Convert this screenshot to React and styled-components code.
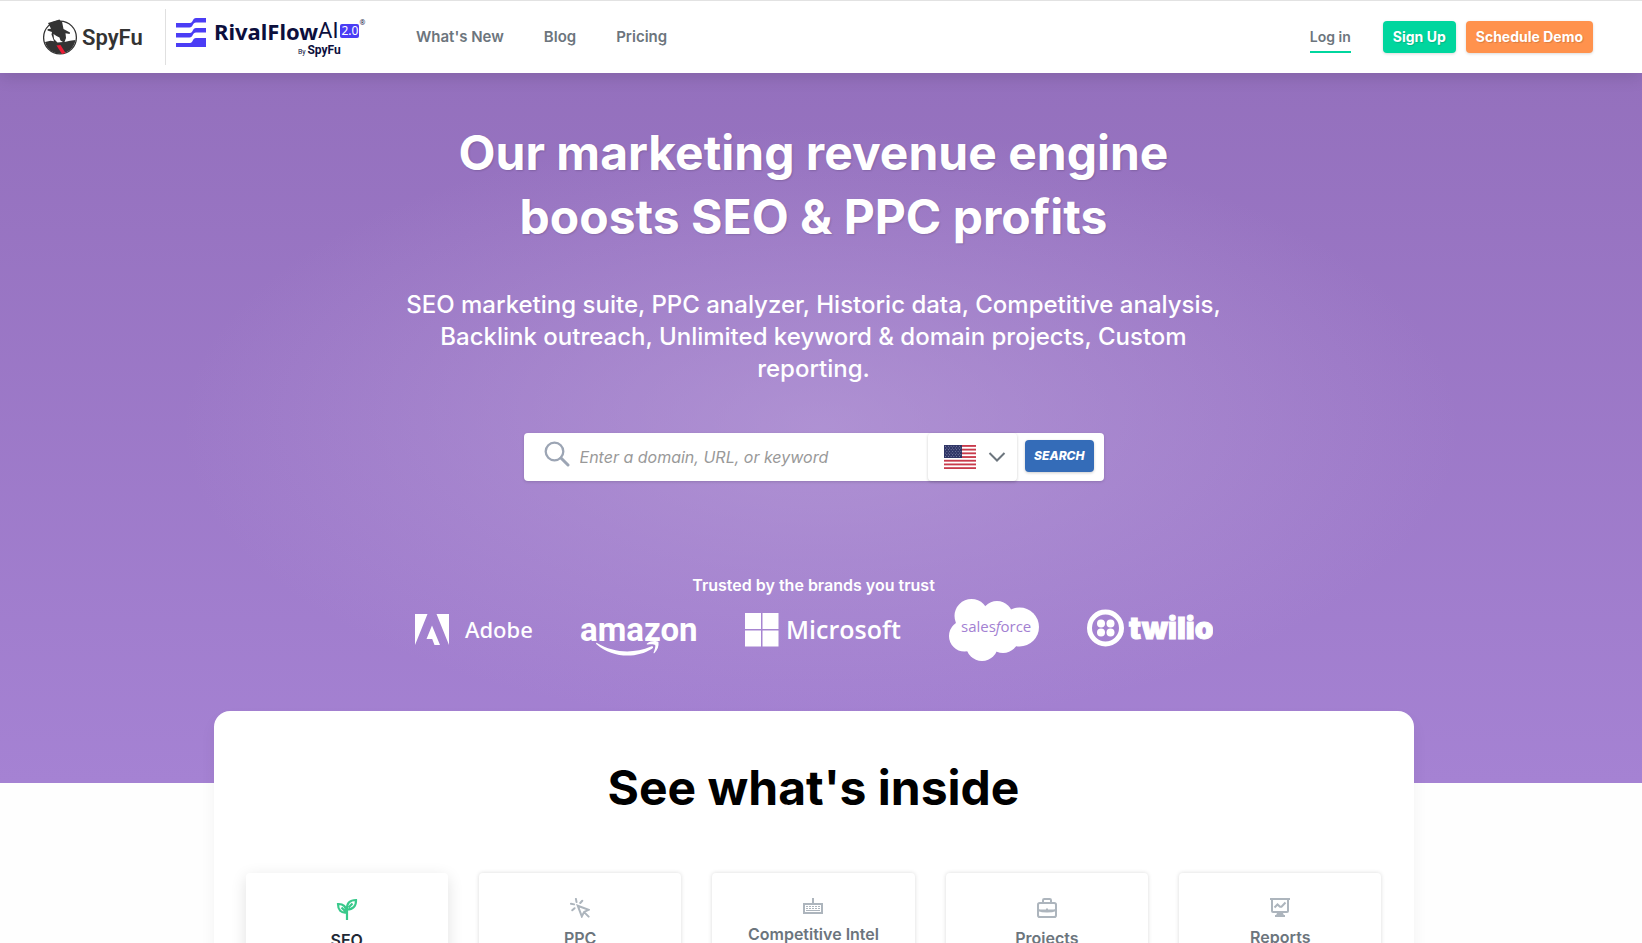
import React, { useState } from 'react'
import styled, { createGlobalStyle } from 'styled-components'

const flagRows = [0, 1, 2, 3, 4, 5, 6]

const SpyFuMark = () => (
  <svg width="36" height="36" viewBox="0 0 36 36" aria-hidden="true">
    <circle cx="18" cy="18.5" r="16.4" fill="#fff" stroke="#333" strokeWidth="1.3" />
    <path d="M6 4 17.500.5l1 1.500 1.500.5L21.500 10l6.500 3.500-.3 1.500-4.200-.8L24 19l-1.500 4 5.500-1.200 5.500-.8c-1.500 8-7.500 13.500-15.500 13.500-7.500 0-13-4.500-15-11.500l5.500-1.200 3.500.5-2.500-6.800L10 13l-4.500-1.500.2-1.500 3.300-.3z" fill="#333" />
    <path d="M11.500 15l.5 5 3.500 3.500 5.500-.5-2.500-1.500-1-3-3-1.500z" fill="#fff" />
    <path d="M14.500 26.500l4-.5 5 8-3.500 1z" fill="#ec1c35" />
  </svg>
)

const RivalMark = () => (
  <svg width="30" height="29" viewBox="0 0 30 29" fill="#4b3df5" aria-hidden="true">
    <path d="M0 5h14c3 0 2.500-5 6-5h10v4.500H20c-3.500 0-3 5-6.500 5H0z" />
    <path d="M0 15h14c3 0 2.500-5 6-5h10v4.500H20c-3.500 0-3 5-6.500 5H0z" />
    <path d="M0 25h14c3 0 2.500-5 6-5h10v9H0z" />
  </svg>
)

const SearchIcon = () => (
  <svg width="26" height="26" viewBox="0 0 26 26" fill="none" stroke="#9ca5b4" aria-hidden="true">
    <circle cx="10.500" cy="10.500" r="8.800" strokeWidth="2.300" />
    <path d="M17 17l7 7" strokeWidth="3" strokeLinecap="round" />
  </svg>
)

const Flag = () => (
  <svg width="32" height="24" viewBox="0 0 32 24" aria-hidden="true">
    <rect width="32" height="24" fill="#fff" />
    {flagRows.map((n) => (
      <rect key={n} y={n * 3.7} width="32" height="1.850" fill="#c83a4b" />
    ))}
    <rect width="18" height="13" fill="#2f3566" />
    {flagRows.map((row) =>
      [0, 1, 2, 3, 4, 5].map((col) => (
        <circle
          key={`${row}-${col}`}
          cx={1.5 + col * 2.8 + (row % 2 ? 1.4 : 0)}
          cy={1.3 + row * 1.7}
          r="0.45"
          fill="#c3c6dc"
        />
      ))
    )}
  </svg>
)

const Chevron = () => (
  <svg width="18" height="10" viewBox="0 0 18 10" fill="none" stroke="#6c757d" strokeWidth="2" aria-hidden="true">
    <path d="M1.500 1 9 8.500 16.500 1" />
  </svg>
)

const AdobeLogo = () => (
  <svg width="118" height="32" viewBox="0 0 118 32" role="img" aria-label="Adobe" fill="#fff">
    <path d="M0 0h12.500L0 31zM21.500 0H34v31zM17 11.500 25 31h-5.500l-2.300-6H11.500z" />
    <text x="50" y="24" fontSize="22" fontWeight="500" fontFamily="'Noto Sans', sans-serif">Adobe</text>
  </svg>
)

const AmazonLogo = () => (
  <svg width="118" height="52" viewBox="0 0 118 52" role="img" aria-label="amazon" fill="#fff">
    <text x="0" y="37" fontSize="33" fontWeight="700" fontFamily="Roboto, sans-serif">amazon</text>
    <path d="M17 39c17 10 36 11 54 3.500 2-.8 3 1 1 2.300C56 55 32 54 16.500 40.200c-.8-.8-.3-1.700.5-1.200z" />
    <path d="M67 39.500c4-3 9-3 11.500-1.500.5 4-1 8-4 11-.8.5-1.200 0-.8-.8 1-2.500 2-5.500 1.500-7.200-1.500-1.200-5-.8-7.500-.5-1 .1-1.200-.5-.7-1z" />
  </svg>
)

const MicrosoftLogo = () => (
  <svg width="157" height="34" viewBox="0 0 157 34" role="img" aria-label="Microsoft" fill="#fff">
    <path d="M0 0h16v16H0zM17.500 0h16v16h-16zM0 17.500h16v16H0zM17.500 17.500h16v16h-16z" />
    <text x="41" y="26" fontSize="25" fontWeight="600" fontFamily="'Open Sans', sans-serif">Microsoft</text>
  </svg>
)

const SalesforceLogo = () => (
  <svg width="90" height="62" viewBox="0 0 90 62" role="img" aria-label="salesforce" fill="#fff">
    <circle cx="22.500" cy="17" r="17" />
    <circle cx="48" cy="18" r="16" />
    <circle cx="70.500" cy="28" r="19.500" />
    <circle cx="15.500" cy="37" r="15.500" />
    <circle cx="33" cy="46" r="16" />
    <circle cx="54" cy="38" r="16" />
    <path d="M15 20h60v20l-40 12-20-5z" />
    <text x="12" y="33" fontSize="15" fill="#a381d2" fontFamily="'Open Sans', sans-serif">
      sales<tspan fontStyle="italic">f</tspan>orce
    </text>
  </svg>
)

const TwilioLogo = () => (
  <svg width="126" height="42" viewBox="0 0 126 42" role="img" aria-label="twilio" fill="#fff">
    <circle cx="18.500" cy="19" r="16" fill="none" stroke="#fff" strokeWidth="5" />
    <circle cx="14" cy="14.500" r="4" />
    <circle cx="23.500" cy="14.500" r="4" />
    <circle cx="14" cy="23.500" r="4" />
    <circle cx="23.500" cy="23.500" r="4" />
    <text x="42" y="30" fontSize="30" fontWeight="900" fontFamily="Inter, sans-serif" stroke="#fff">twilio</text>
  </svg>
)

const SeedlingIcon = () => (
  <svg width="22" height="22" viewBox="0 0 22 22" fill="none" stroke="currentColor" strokeWidth="2.200" aria-hidden="true">
    <path d="M11 22V12M2 6c5-.3 8.500 2.500 8.500 8.500C5 15.200 2 12 2 6zM11 11.500C10.500 5 14 2 20 2c.3 6-3 9.500-9 9.500M5.500 9.500l4 4M12.500 9.500l4-4" />
  </svg>
)

const ClickIcon = () => (
  <svg width="20" height="20" viewBox="0 0 22 22" fill="none" stroke="currentColor" strokeWidth="2.200" strokeLinecap="round" aria-hidden="true">
    <path d="M8.500 8.500l12 4.500-5 2.300-2.500 5zM15.500 15.500l5 5M6.500 1l.7 3.500M1 6.300l3.500.7M13.500 3l-2.200 2.500M2.500 13.500 5 11.300" />
  </svg>
)

const KeyboardIcon = () => (
  <svg width="20" height="16" viewBox="0 0 20 16" fill="none" stroke="currentColor" aria-hidden="true">
    <path d="M1 6h18v9H1z" strokeWidth="2" />
    <path d="M10 0v5" strokeWidth="2" />
    <path d="M3 8.500h14M3 10.500h14" strokeWidth="1" strokeDasharray="2 1" />
    <path d="M3 12.500h14" strokeWidth="1" />
  </svg>
)

const BriefcaseIcon = () => (
  <svg width="20" height="20" viewBox="0 0 20 20" fill="none" stroke="currentColor" strokeWidth="2" aria-hidden="true">
    <rect x="1" y="5" width="18" height="14" rx="1.800" />
    <path d="M6 4.500V2.200C6 1.400 6.500 1 7.300 1h5.400c.8 0 1.300.4 1.300 1.200v2.300M1 12c5 2 13 2 18 0M1 12.500h18M10 10.500v3" />
  </svg>
)

const BoardIcon = () => (
  <svg width="20" height="19" viewBox="0 0 20 19" fill="none" stroke="currentColor" strokeWidth="2" aria-hidden="true">
    <path d="M0 1h20M2 1v12c0 .6.4 1 1 1h14c.6 0 1-.4 1-1V1M8 15l-1 2.500M12 15l1 2.500M5 18h10M8 16h4" />
    <path d="M4.500 9.500l3-3 2.500 2.300h1.500l4-4.300" />
  </svg>
)

const tabs = [
  { name: 'SEO', icon: <SeedlingIcon /> },
  { name: 'PPC', icon: <ClickIcon /> },
  { name: 'Competitive Intel', icon: <KeyboardIcon /> },
  { name: 'Projects', icon: <BriefcaseIcon /> },
  { name: 'Reports', icon: <BoardIcon /> },
]

const App = () => {
  const [keyword, setKeyword] = useState('')
  const [activeTab, setActiveTab] = useState('SEO')

  return (
    <Page>
      <GlobalStyle />
      <Header>
        <SpyFuLink href="#spyfu">
          <SpyFuMark />
          <span>SpyFu</span>
        </SpyFuLink>
        <RivalLink href="#rivalflow">
          <RivalMark />
          <RivalText>
            <RivalName>
              RivalFlow<span>AI</span>
              <Version>2.0</Version>
              <sup>®</sup>
            </RivalName>
            <ByLine>
              By <b>SpyFu</b>
            </ByLine>
          </RivalText>
        </RivalLink>
        <Nav>
          <NavLink href="#new">What's New</NavLink>
          <NavLink href="#blog">Blog</NavLink>
          <NavLink href="#pricing">Pricing</NavLink>
        </Nav>
        <Actions>
          <LoginLink href="#login">Log in</LoginLink>
          <ActionButton $color="#00d69e">Sign Up</ActionButton>
          <ActionButton $color="#ff924d">Schedule Demo</ActionButton>
        </Actions>
      </Header>
      <Hero>
        <Title>Our marketing revenue engine boosts SEO & PPC profits</Title>
        <Subtitle>
          SEO marketing suite, PPC analyzer, Historic data, Competitive
          analysis, Backlink outreach, Unlimited keyword & domain projects,
          Custom reporting.
        </Subtitle>
        <SearchForm onSubmit={(e) => e.preventDefault()}>
          <SearchLabel htmlFor="keyword" aria-label="Search">
            <SearchIcon />
          </SearchLabel>
          <SearchInput
            id="keyword"
            value={keyword}
            placeholder="Enter a domain, URL, or keyword"
            onChange={(e) => setKeyword(e.target.value)}
          />
          <CountryButton type="button" aria-label="Country: United States">
            <Flag />
            <Chevron />
          </CountryButton>
          <SearchButton type="submit">SEARCH</SearchButton>
        </SearchForm>
        <Trusted>Trusted by the brands you trust</Trusted>
        <Brands>
          <AdobeLogo />
          <AmazonLogo />
          <MicrosoftLogo />
          <SalesforceLogo />
          <TwilioLogo />
        </Brands>
      </Hero>
      <InsideWrap>
        <Inside>
          <InsideTitle>See what's inside</InsideTitle>
          <Tabs>
            {tabs.map((tab) => (
              <Tab
                key={tab.name}
                type="button"
                $active={tab.name === activeTab}
                onClick={() => setActiveTab(tab.name)}
              >
                {tab.icon}
                <span>{tab.name}</span>
              </Tab>
            ))}
          </Tabs>
        </Inside>
      </InsideWrap>
    </Page>
  )
}

const GlobalStyle = createGlobalStyle`
  * {
    box-sizing: border-box;
  }
  html {
    height: 100%;
    overflow: hidden;
  }
  body {
    margin: 0;
    height: 100%;
    overflow: hidden auto;
    scrollbar-width: none;
    background-color: #fefefe;
    font-family: Inter, 'Liberation Sans', sans-serif;
  }
  button, input {
    font-family: inherit;
  }
  a {
    text-decoration: none;
  }
  svg {
    flex-shrink: 0;
  }
`

const Page = styled.div`
  width: 100%;
`

const Header = styled.header`
  position: relative;
  z-index: 1;
  display: flex;
  align-items: center;
  height: 73px;
  padding: 0 49px 0 42px;
  border-top: 1px solid #e2e2e2;
  background-color: #fff;
  box-shadow: 0 4px 16px rgba(0, 0, 0, 0.12);
`

const SpyFuLink = styled.a`
  display: flex;
  align-items: center;
  gap: 4px;
  width: 124px;
  height: 56px;
  border-right: 1px solid #e0e0e0;
  color: #333;
  font-family: Roboto, sans-serif;
  font-size: 22px;
  font-weight: 600;
`

const RivalLink = styled.a`
  display: flex;
  align-items: flex-start;
  gap: 8px;
  width: 192px;
  height: 38px;
  margin-left: 10px;
  color: #0c0f3d;
`

const RivalText = styled.div`
  font-family: 'Noto Sans', sans-serif;
`

const RivalName = styled.div`
  display: flex;
  align-items: center;
  height: 26px;
  font-size: 22px;
  font-weight: 700;
  line-height: 26px;
  span {
    font-family: Roboto, sans-serif;
    font-weight: 400;
  }
  sup {
    align-self: flex-start;
    font-size: 7px;
    font-weight: 400;
    line-height: 10px;
  }
`

const Version = styled.b`
  margin-left: 2px;
  padding: 0 1px;
  border-radius: 2px;
  background-color: #4b3df5;
  color: #fff;
  font-size: 12px;
  font-weight: 400;
  line-height: 14px;
`

const ByLine = styled.div`
  padding-left: 84px;
  font-family: Roboto, sans-serif;
  font-size: 7px;
  line-height: 12px;
  b {
    font-size: 12px;
  }
`

const Nav = styled.nav`
  display: flex;
  gap: 40px;
  margin-left: 48px;
`

const NavLink = styled.a`
  color: #6c757d;
  font-size: 15px;
  font-weight: 600;
  line-height: 20px;
`

const Actions = styled.div`
  display: flex;
  align-items: center;
  gap: 10px;
  margin-left: auto;
`

const LoginLink = styled.a`
  margin-right: 22px;
  padding: 4px 0 2px;
  border-bottom: 2px solid #00d69e;
  color: #6c757d;
  font-size: 14px;
  font-weight: 600;
  line-height: 24px;
`

const ActionButton = styled.button`
  height: 32px;
  padding: 0 10px 2px;
  border: 0;
  border-radius: 4px;
  background-color: ${(props) => props.$color};
  box-shadow: 0 1px 3px rgba(0, 0, 0, 0.15);
  color: #fff;
  font-size: 14px;
  font-weight: 700;
  text-shadow: 1px 1px 1px rgba(0, 0, 0, 0.15);
  cursor: pointer;
`

const Hero = styled.section`
  display: flex;
  flex-direction: column;
  align-items: center;
  padding: 48px 15px 120px 0;
  background: radial-gradient(
      ellipse 640px 300px at 50% 50%,
      rgba(190, 165, 220, 0.55),
      rgba(190, 165, 220, 0)
    ),
    linear-gradient(#9470bd, #a582d3);
  color: #fff;
  text-align: center;
`

const Title = styled.h1`
  max-width: 840px;
  margin: 0;
  font-size: 48px;
  font-weight: 700;
  line-height: 64px;
  text-shadow: 1px 1px 2px rgba(0, 0, 0, 0.15);
  text-wrap: balance;
`

const Subtitle = styled.p`
  max-width: 840px;
  margin: 40px 0 48px;
  font-size: 24px;
  font-weight: 500;
  line-height: 32px;
`

const SearchForm = styled.form`
  display: flex;
  align-items: center;
  width: 100%;
  max-width: 580px;
  height: 48px;
  padding-right: 10px;
  border-radius: 4px;
  background-color: #fff;
  box-shadow: 0 1px 3px rgba(0, 0, 0, 0.15);
`

const SearchLabel = styled.label`
  display: flex;
  padding: 0 10px 6px 20px;
`

const SearchInput = styled.input`
  flex: 1;
  min-width: 0;
  height: 100%;
  padding: 0;
  border: 0;
  outline: 0;
  background: none;
  color: #333;
  font-size: 16px;
  font-style: italic;
  &::placeholder {
    color: #999;
  }
`

const CountryButton = styled.button`
  display: flex;
  align-items: center;
  gap: 12px;
  height: 48px;
  margin-right: 8px;
  padding: 0 11px 0 16px;
  border: 0;
  border-radius: 4px;
  background-color: #fff;
  box-shadow: 0 1px 3px rgba(0, 0, 0, 0.2);
  cursor: pointer;
`

const SearchButton = styled.button`
  height: 32px;
  padding: 0 9px 2px;
  margin-bottom: 2px;
  border: 0;
  border-radius: 4px;
  background-color: #346cb8;
  box-shadow: 0 1px 3px rgba(0, 0, 0, 0.2);
  color: #fff;
  font-size: 12px;
  font-style: italic;
  font-weight: 800;
  cursor: pointer;
`

const Trusted = styled.p`
  margin: 92px 0 0;
  font-size: 16px;
  font-weight: 600;
  line-height: 24px;
`

const Brands = styled.div`
  display: flex;
  align-items: center;
  justify-content: space-between;
  width: 100%;
  max-width: 798px;
  height: 66px;
`

const InsideWrap = styled.div`
  display: flex;
  justify-content: center;
  margin-top: -72px;
  padding-right: 15px;
`

const Inside = styled.section`
  width: 100%;
  max-width: 1200px;
  padding: 40px 32px;
  border-radius: 16px;
  background-color: #fff;
  box-shadow: 0 8px 16px rgba(0, 0, 0, 0.05);
`

const InsideTitle = styled.h2`
  margin: 0 0 48px;
  color: #000;
  font-size: 48px;
  font-weight: 700;
  line-height: 74px;
  text-align: center;
`

const Tabs = styled.div`
  display: grid;
  grid-template-columns: repeat(5, 1fr);
  gap: 31px;
`

const Tab = styled.button`
  display: flex;
  flex-direction: column;
  align-items: center;
  gap: 8px;
  height: 112px;
  padding-top: 25px;
  border: 0;
  border-radius: 4px;
  background-color: #fff;
  box-shadow: ${(props) =>
    props.$active
      ? '0 4px 16px rgba(0, 0, 0, 0.12)'
      : '0 0 4px rgba(0, 0, 0, 0.15)'};
  color: ${(props) => (props.$active ? '#38c98b' : '#adb5bd')};
  font-size: 16px;
  font-weight: 600;
  line-height: 24px;
  cursor: pointer;
  span {
    color: ${(props) => (props.$active ? '#212936' : '#6c757d')};
  }
`

export default App
